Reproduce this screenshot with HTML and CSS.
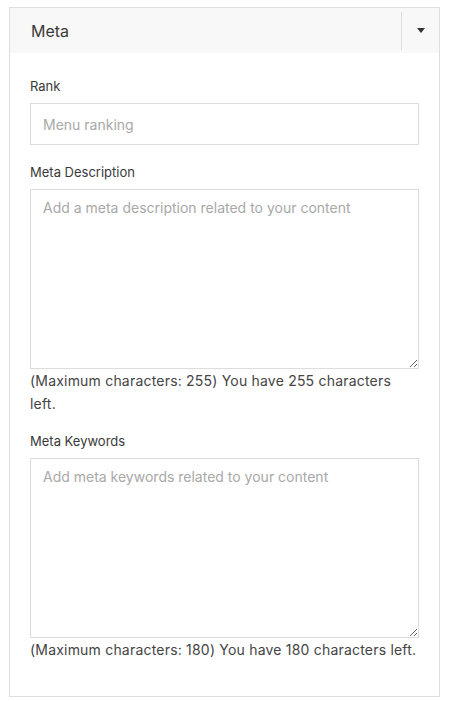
FILE: index.html
```html
<!DOCTYPE html>
<html>
<head>
<meta charset="utf-8">
<link rel="stylesheet" href="styles.css">
</head>
<body>
<div class="card">
  <div class="card-header">
    <span class="title">Meta</span>
    <button class="toggle" type="button"><span class="caret"></span></button>
  </div>
  <div class="card-body">
    <div class="group group-input">
      <label class="label">Rank</label>
      <input class="input" type="text" placeholder="Menu ranking">
    </div>
    <div class="group">
      <label class="label">Meta Description</label>
      <textarea class="textarea" placeholder="Add a meta description related to your content"></textarea>
      <div class="help">(Maximum characters: 255) You have 255 characters left.</div>
    </div>
    <div class="group">
      <label class="label">Meta Keywords</label>
      <textarea class="textarea" placeholder="Add meta keywords related to your content"></textarea>
      <div class="help">(Maximum characters: 180) You have 180 characters left.</div>
    </div>
  </div>
</div>
</body>
</html>
```
FILE: styles.css
```css
html, body {
  margin: 0;
  padding: 0;
  background: #fff;
}
body {
  padding: 7px 0 0 9px;
  font-family: Inter, "Noto Sans", sans-serif;
  color: #333;
}
.card {
  width: 429px;
  height: 688px;
  border: 1px solid #dedede;
  box-sizing: content-box;
  display: flex;
  flex-direction: column;
}
.card-header {
  height: 45px;
  background: #f8f8f8;
  display: flex;
  align-items: center;
  justify-content: space-between;
  padding-left: 21px;
}
.title {
  font-size: 16px;
  color: #3a3a3a;
}
.toggle {
  height: 38px;
  width: 38px;
  border: none;
  border-left: 1px solid #ddd;
  background: transparent;
  display: flex;
  align-items: center;
  justify-content: center;
  padding: 0;
  margin-right: 0;
}
.caret {
  width: 0;
  height: 0;
  border-left: 4.5px solid transparent;
  border-right: 4.5px solid transparent;
  border-top: 5px solid #333;
  margin-left: 1px;
}
.card-body {
  padding: 24px 20px 0 20px;
  display: flex;
  flex-direction: column;
}
.group {
  display: flex;
  flex-direction: column;
  margin-bottom: 17px;
}
.group-input {
  margin-bottom: 18px;
}
.label {
  font-size: 13px;
  line-height: 18px;
  color: #3a3a3a;
  margin-bottom: 8px;
}
.input, .textarea {
  box-sizing: border-box;
  width: 389px;
  border: 1px solid #ddd;
  border-radius: 0;
  font-family: Inter, "Noto Sans", sans-serif;
  font-size: 14px;
  color: #333;
  padding: 0 12px;
  outline: none;
  margin: 0;
}
.input {
  height: 42px;
}
.textarea {
  height: 180px;
  padding: 8px 12px;
  line-height: 20px;
  resize: vertical;
  display: block;
}
.input::placeholder, .textarea::placeholder {
  color: #a8a8a8;
}
.help {
  font-size: 14px;
  letter-spacing: 0.2px;
  line-height: 23px;
  color: #444;
  margin-top: 0;
}
```
